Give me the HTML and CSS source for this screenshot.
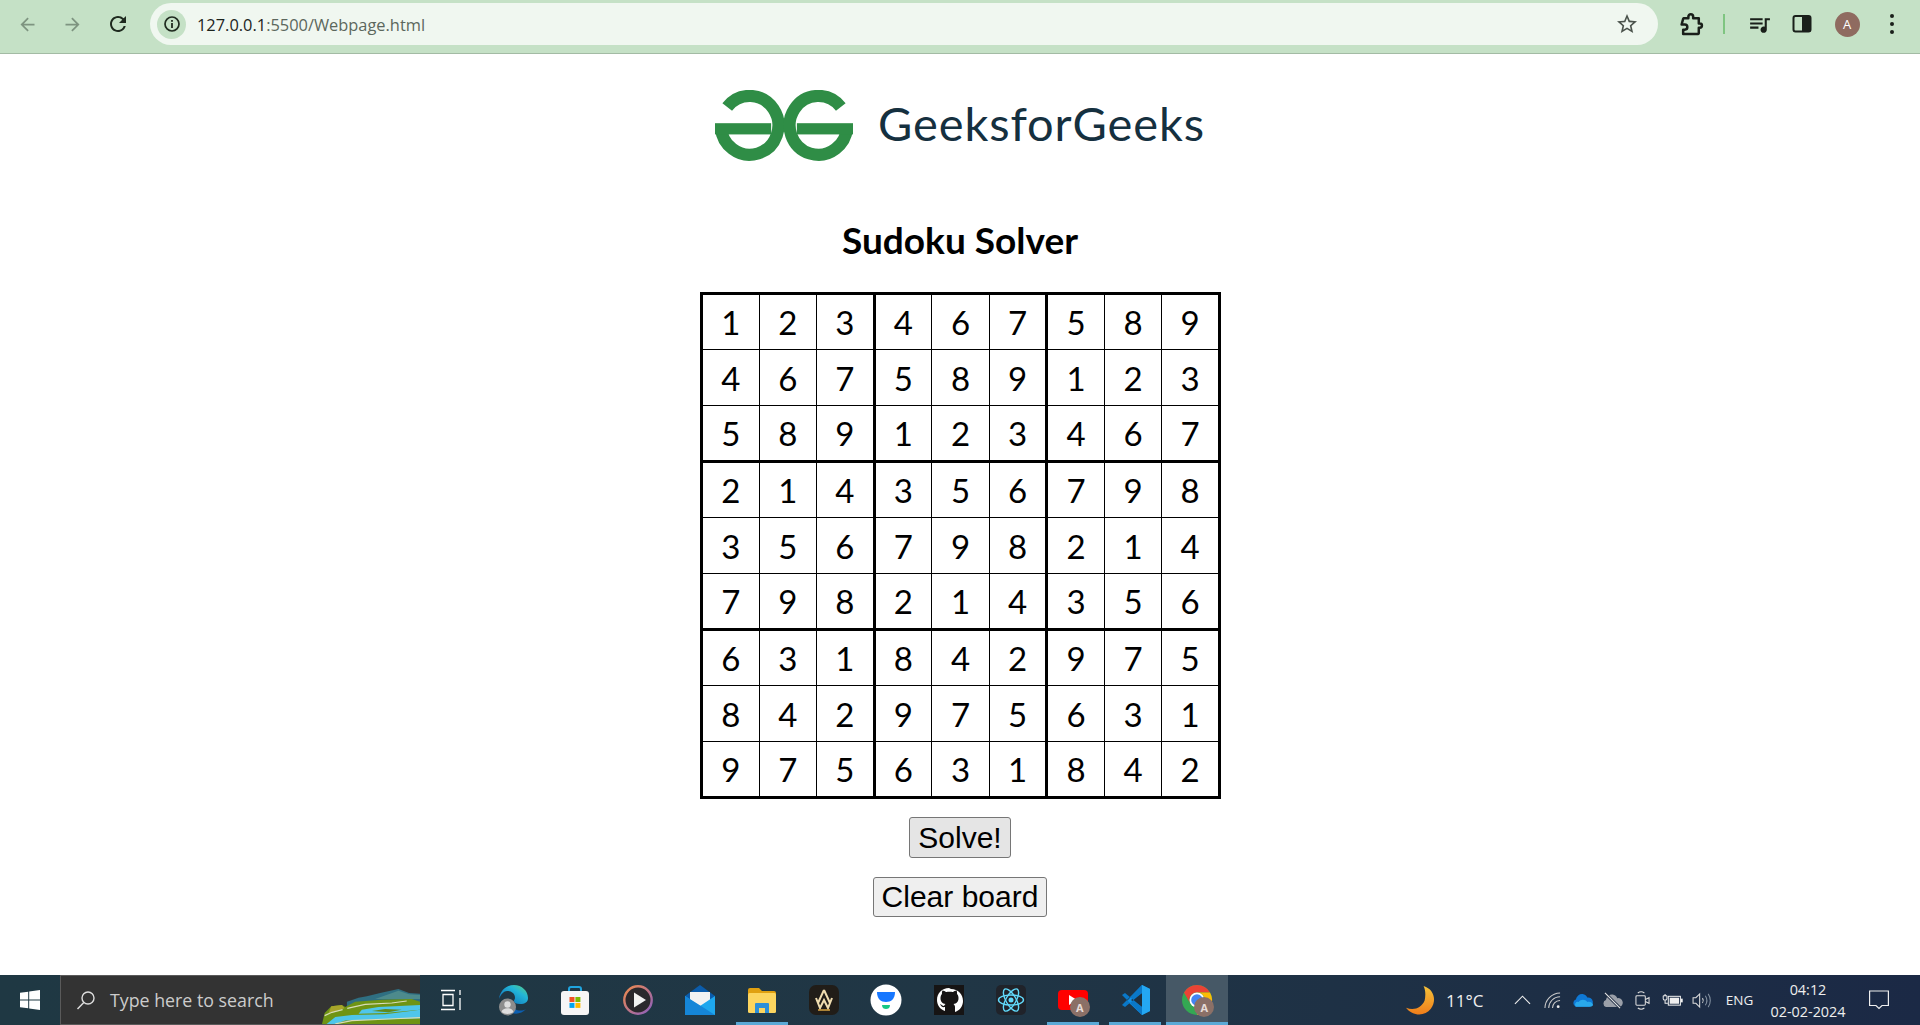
FILE: index.html
```html
<!DOCTYPE html>
<html lang="en">
  <head>
    <meta charset="UTF-8" />
    <meta name="viewport" content="width=device-width, initial-scale=1.0" />
    <title>Sudoku Solver</title>
    <link rel="stylesheet" href="styles.css">
  </head>

  <body>
    <!-- browser toolbar -->
    <div class="toolbar">
      <div class="nav">
        <span class="navBtn off"><svg viewBox="0 0 24 24" width="21" height="21"><path d="M20 11H7.83l5.59-5.59L12 4l-8 8 8 8 1.41-1.41L7.83 13H20v-2z"/></svg></span>
        <span class="navBtn off"><svg viewBox="0 0 24 24" width="21" height="21"><path d="M4 11h12.17l-5.59-5.59L12 4l8 8-8 8-1.41-1.41L16.17 13H4v-2z"/></svg></span>
        <span class="navBtn"><svg viewBox="0 0 24 24" width="24" height="24"><path d="M17.65 6.35A7.958 7.958 0 0 0 12 4c-4.42 0-7.99 3.58-7.99 8s3.57 8 7.99 8c3.73 0 6.84-2.55 7.73-6h-2.08A5.99 5.99 0 0 1 12 18c-3.31 0-6-2.69-6-6s2.69-6 6-6c1.66 0 3.14.69 4.22 1.78L13 11h7V4l-2.35 2.35z"/></svg></span>
      </div>
      <div class="omnibox">
        <span class="chip"><svg viewBox="0 0 18 18" width="18" height="18"><circle cx="9" cy="9" r="7" fill="none" stroke="#1f2a1f" stroke-width="1.7"/><rect x="8.1" y="8" width="1.8" height="5" fill="#1f2a1f"/><rect x="8.1" y="5" width="1.8" height="1.8" fill="#1f2a1f"/></svg></span>
        <span class="url"><b>127.0.0.1</b>:5500/Webpage.html</span>
        <svg class="star" viewBox="0 0 24 24" width="24" height="24"><path d="M22 9.24l-7.19-.62L12 2 9.19 8.63 2 9.24l5.46 4.73L5.82 21 12 17.27 18.18 21l-1.63-7.03L22 9.24zM12 15.4l-3.76 2.27 1-4.28-3.32-2.88 4.38-.38L12 6.1l1.71 4.04 4.38.38-3.32 2.88 1 4.28L12 15.4z"/></svg>
      </div>
      <div class="tools">
        <span class="tool puzzle"><svg viewBox="0 0 24 24" width="25" height="25"><path d="M4.500 6H9V4.500a2.300 2.300 0 0 1 4.600 0V6H19v5h1a2 2 0 0 1 0 4h-1v5.500a.5.500 0 0 1-.5.500H4v-4h1.500a2.500 2.500 0 0 0 0-5H2.500L4 6.500z" fill="none" stroke="#1a1f1a" stroke-width="2.400" stroke-linejoin="round"/></svg></span>
        <span class="sep"></span>
        <span class="tool media"><svg viewBox="0 0 24 24" width="25" height="25"><path d="M15 6H3v2h12V6zm0 4H3v2h12v-2zM3 16h8v-2H3v2zM17 6v8.18c-.31-.11-.65-.18-1-.18-1.66 0-3 1.34-3 3s1.34 3 3 3 3-1.34 3-3V8h3V6h-5z"/></svg></span>
        <span class="tool side"><svg viewBox="0 0 20 20" width="20" height="20"><rect x="1.5" y="2" width="17" height="15.5" rx="2" fill="none" stroke="#1a1f1a" stroke-width="2"/><rect x="10" y="2" width="8.5" height="15.5" fill="#1a1f1a"/></svg></span>
        <span class="tool avatarSlot"><span class="avatar">A</span></span>
        <span class="tool dots"><i></i><i></i><i></i></span>
      </div>
    </div>

    <div class="page">
      <div class="logo">
        <svg viewBox="0 0 418 217" width="139" height="72">
          <g fill="none" stroke="#2f8d46" stroke-width="37">
            <path d="M37 51A87 89 0 1 1 18 106"/>
            <path d="M381 51A87 89 0 1 0 400 106"/>
          </g>
          <rect x="0" y="100" width="170" height="34" fill="#2f8d46"/>
          <rect x="248" y="100" width="170" height="34" fill="#2f8d46"/>
        </svg>
        <span class="logoText">GeeksforGeeks</span>
      </div>

      <h1 class="title">Sudoku Solver</h1>

      <table class="board">
        <tbody>
          <tr><td>1</td><td>2</td><td>3</td><td>4</td><td>6</td><td>7</td><td>5</td><td>8</td><td>9</td></tr>
          <tr><td>4</td><td>6</td><td>7</td><td>5</td><td>8</td><td>9</td><td>1</td><td>2</td><td>3</td></tr>
          <tr><td>5</td><td>8</td><td>9</td><td>1</td><td>2</td><td>3</td><td>4</td><td>6</td><td>7</td></tr>
          <tr><td>2</td><td>1</td><td>4</td><td>3</td><td>5</td><td>6</td><td>7</td><td>9</td><td>8</td></tr>
          <tr><td>3</td><td>5</td><td>6</td><td>7</td><td>9</td><td>8</td><td>2</td><td>1</td><td>4</td></tr>
          <tr><td>7</td><td>9</td><td>8</td><td>2</td><td>1</td><td>4</td><td>3</td><td>5</td><td>6</td></tr>
          <tr><td>6</td><td>3</td><td>1</td><td>8</td><td>4</td><td>2</td><td>9</td><td>7</td><td>5</td></tr>
          <tr><td>8</td><td>4</td><td>2</td><td>9</td><td>7</td><td>5</td><td>6</td><td>3</td><td>1</td></tr>
          <tr><td>9</td><td>7</td><td>5</td><td>6</td><td>3</td><td>1</td><td>8</td><td>4</td><td>2</td></tr>
        </tbody>
      </table>

      <button class="btn solve">Solve!</button>
      <button class="btn clear">Clear board</button>
    </div>

    <!-- windows taskbar -->
    <div class="taskbar">
      <div class="start">
        <svg viewBox="0 0 20 20" width="20" height="20"><path d="M0 2.8 8.2 1.7V9.5H0zM9.2 1.5 20 0V9.5H9.2zM0 10.5H8.2V18.3L0 17.2zM9.2 10.5H20V20L9.2 18.5z" fill="#fff"/></svg>
      </div>
      <div class="search">
        <svg viewBox="0 0 20 20" width="20" height="20"><circle cx="12" cy="8" r="6" fill="none" stroke="#ddd" stroke-width="1.4"/><path d="M7.8 12.4 1.5 19" stroke="#ddd" stroke-width="1.5"/></svg>
        <span class="searchText">Type here to search</span>
        <svg class="hills" viewBox="0 0 295 105" width="98" height="35">
          <path d="M75 38 110 26 135 22 175 12 230 0 262 12 295 14V70H75z" fill="#2f6f82"/>
          <path d="M160 30 230 5 262 16 295 18V30z" fill="#4d8a8c"/>
          <path d="M0 105 8 72 28 52 60 48 70 54 100 38 180 32 270 30 295 38V105z" fill="#6f9414"/>
          <path d="M28 52 60 48 68 58 20 72z" fill="#a8a52a"/>
          <path d="M14 105 40 84 90 78 190 76 295 62V88L180 92 70 95 40 105z" fill="#4fc6ea"/>
          <path d="M120 62 170 54 295 48V62L190 72 110 74z" fill="#4fc6ea"/>
          <path d="M150 66 190 60 240 62 200 70z" fill="#5f8a1a"/>
          <path d="M8 80 30 70 62 62M76 58 130 46 210 42 255 36M40 105 90 95 200 90 295 86" fill="none" stroke="#d8dcb8" stroke-width="3.500"/>
        </svg>
      </div>
      <div class="apps">
        <span class="app"><svg viewBox="0 0 24 24" width="24" height="24" fill="none" stroke="#fff" stroke-width="1.3"><path d="M2 2.5H16M2 21.5H16M4 6.5H14V17.5H4zM21 2V7M21 10V22"/></svg></span>
        <span class="app"><svg viewBox="0 0 32 32" width="32" height="32"><defs><linearGradient id="edge" x1="1" y1="0" x2="0" y2="1"><stop offset="0" stop-color="#5fd07a"/><stop offset=".35" stop-color="#22b5d8"/><stop offset="1" stop-color="#0c5fb0"/></linearGradient></defs><path d="M2 15C3 6 10 1 17 1c8 0 14 6 14 13 0 4-3 6-8 6-4 0-6-1-6-3 0-1 1-2 1-3 0-5-4-7-8-7-3 0-6 3-8 8z" fill="url(#edge)"/><path d="M10 26c5 5 14 5 19-1-3 2-8 2-11 0z" fill="#0c5fb0"/><circle cx="10.500" cy="23" r="8.500" fill="#8d8d8d"/><circle cx="10.500" cy="20.500" r="3.200" fill="#dedede"/><path d="M4.500 28c1-5 11-5 12 0-3 2.500-9 2.500-12 0z" fill="#dedede"/></svg></span>
        <span class="app"><svg viewBox="0 0 32 32" width="32" height="32"><path d="M10 8V5a2 2 0 0 1 2-2h8a2 2 0 0 1 2 2v3" fill="none" stroke="#1fa5e0" stroke-width="2"/><rect x="2" y="7" width="28" height="24" rx="3" fill="#f6f6f6"/><rect x="10.500" y="13" width="5" height="5" fill="#f25022"/><rect x="16.400" y="13" width="5" height="5" fill="#7fba00"/><rect x="10.500" y="18.900" width="5" height="5" fill="#00a4ef"/><rect x="16.400" y="18.900" width="5" height="5" fill="#ffb900"/></svg></span>
        <span class="app"><svg viewBox="0 0 32 32" width="32" height="32"><defs><linearGradient id="play" x1="0" y1="0" x2="1" y2="1"><stop offset="0" stop-color="#f08a4b"/><stop offset="1" stop-color="#8a5fc0"/></linearGradient></defs><circle cx="16" cy="16" r="13.700" fill="#2a282c" stroke="url(#play)" stroke-width="2.400"/><path d="M12 8.500 24 16 12 23.500z" fill="#f2f2f2"/></svg></span>
        <span class="app"><svg viewBox="0 0 32 32" width="32" height="32"><path d="M16 1 31 12V20H1V12z" fill="#0b5cab"/><path d="M6 8H26V20L16 24 6 20z" fill="#f2f2f2"/><path d="M1 12 16 22 31 12V31H1z" fill="#1ea7ee"/><path d="M1 31 1 12 17 22 31 31z" fill="#1586d8"/></svg></span>
        <span class="app on"><svg viewBox="0 0 32 32" width="32" height="32"><path d="M2 6a2 2 0 0 1 2-2h9l3 3h12a2 2 0 0 1 2 2v4H2z" fill="#e0a010"/><rect x="2" y="9" width="28" height="20" rx="1.500" fill="#fcd55f"/><path d="M9 29V20a1 1 0 0 1 1-1h12a1 1 0 0 1 1 1v9h-4v-5h-6v5z" fill="#2c8fd8"/></svg></span>
        <span class="app"><svg viewBox="0 0 32 32" width="32" height="32"><rect x="1" y="1" width="30" height="30" rx="7" fill="#211d18"/><path d="M16 6 10 19M16 6 22 19M8 14 12 24 16 16 20 24 24 14" fill="none" stroke="#f0ddb0" stroke-width="2"/><path d="M10 26H22" stroke="#d9a441" stroke-width="1.5"/></svg></span>
        <span class="app"><svg viewBox="0 0 32 32" width="32" height="32"><circle cx="16" cy="16" r="15.5" fill="#fff"/><path d="M7 8H25C25 15 21 18 16 18S7 15 7 8z" fill="#1677ff"/><path d="M12 21H20C20 24 18 25 16 25S12 24 12 21z" fill="#16c784"/></svg></span>
        <span class="app"><svg viewBox="0 0 32 32" width="32" height="32"><rect x="1" y="1" width="30" height="30" fill="#161414"/><path d="M16 4C9 4 4 9 4 16c0 5 3 9.5 8 11v-4c-3 .6-4-1-5-3 1.500 .5 2.500 2 4 2 .5-1 1-1.500 1.500-2-3-.5-5-2-5-6 0-1.500.5-3 1.500-4-.2-1 0-2.500.5-3.500 1.500 0 2.500 1 3.500 1.500 1.500-.4 5.500-.4 7 0 1-.5 2-1.500 3.500-1.500.5 1 .7 2.500.5 3.500 1 1 1.500 2.500 1.500 4 0 4-2 5.500-5 6 1 .8 1.500 2 1.500 3v5c5-1.500 8-6 8-11 0-7-5-12-12-12z" fill="#fff"/></svg></span>
        <span class="app"><svg viewBox="0 0 32 32" width="32" height="32"><rect x="1" y="1" width="30" height="30" rx="5" fill="#20232a"/><g fill="none" stroke="#61dafb" stroke-width="1.4"><ellipse cx="16" cy="16" rx="12.500" ry="5"/><ellipse cx="16" cy="16" rx="12.500" ry="5" transform="rotate(60 16 16)"/><ellipse cx="16" cy="16" rx="12.500" ry="5" transform="rotate(120 16 16)"/></g><circle cx="16" cy="16" r="2.500" fill="#61dafb"/></svg></span>
        <span class="app on"><svg viewBox="0 0 32 32" width="32" height="32"><rect x="1" y="6" width="30" height="20" rx="4" fill="#f00"/><path d="M12 11 20 16 12 21z" fill="#fff"/></svg><span class="badge">A</span></span>
        <span class="app on"><svg viewBox="0 0 32 32" width="32" height="32"><path d="M23 1 31 5V27L23 31 8 17z" fill="#0f8fe6"/><path d="M23 1V31L31 27V5z" fill="#24a7f2"/><path d="M23 9V23L12 16z" fill="#1e2f3e"/><path d="M3 11 6 9 23 23V31zM3 21 6 23 23 9V1z" fill="#0a78c8"/></svg></span>
        <span class="app on active"><svg viewBox="0 0 32 32" width="32" height="32"><circle cx="16" cy="16" r="15" fill="#34a853"/><path d="M3 8.500A15 15 0 0 1 29 8.500H16A7.500 7.500 0 0 0 9.500 20z" fill="#ea4335"/><path d="M29 8.500A15 15 0 0 1 16 31L22.500 20A7.500 7.500 0 0 0 16 8.500z" fill="#fbbc04"/><circle cx="16" cy="16" r="7.500" fill="#fff"/><circle cx="16" cy="16" r="5.800" fill="#4285f4"/></svg><span class="badge">A</span></span>
      </div>
      <div class="tray">
        <div class="weather">
          <svg viewBox="0 0 28 28" width="29" height="29"><defs><linearGradient id="moon" x1="0" y1="0" x2="0" y2="1"><stop offset="0" stop-color="#f5c23a"/><stop offset="1" stop-color="#ef7d1a"/></linearGradient></defs><path d="M17 0C27 3 30 14 24 22 18 30 6 29 0 21 8 24 15 21 18 14 19 9 19 4 17 0z" fill="url(#moon)"/></svg>
          <span class="temp">11°C</span>
        </div>
        <span class="trayIcon"><svg viewBox="0 0 18 10" width="17" height="10"><path d="M1 9 9 1 17 9" fill="none" stroke="#eee" stroke-width="1.2"/></svg></span>
        <span class="trayIcon"><svg viewBox="0 0 18 18" width="17" height="17" fill="none" stroke="#ccc" stroke-width="1.1"><path d="M1 17C1 9 8 1 17 1M5 17C5 11 10 5 17 5M9 17C9 13 12 9 17 9"/><circle cx="15" cy="15.500" r="1.500" fill="#eee" stroke="none"/></svg></span>
        <span class="trayIcon"><svg viewBox="0 0 22 14" width="21" height="14"><path d="M4 14A4 4 0 0 1 4 6.500C5 2 9 0 12 1c2 .5 3.500 2 4 3.500A4.800 4.800 0 0 1 18 14z" fill="#0f78d4"/><path d="M4 14A3 3 0 0 1 7 9c2-3 7-3 9 0 3-1 6 1 6 3 0 1-1 2-3 2z" fill="#29a8ea"/></svg></span>
        <span class="trayIcon"><svg viewBox="0 0 22 18" width="21" height="17"><path d="M4 16A4 4 0 0 1 4 8.500C5 4 9 2 12 3c2 .5 3.500 2 4 3.500A4.800 4.800 0 0 1 18 16z" fill="#9a9fa8"/><path d="M3 1 19 17" stroke="#1c2a40" stroke-width="3"/><path d="M3 1 19 17" stroke="#e6e6e6" stroke-width="1.200"/></svg></span>
        <span class="trayIcon"><svg viewBox="0 0 16 20" width="15" height="19" fill="none" stroke="#ddd" stroke-width="1.100"><path d="M3 2C5 .5 8 .5 10 2M3 18C5 19.500 8 19.500 10 18"/><rect x="1" y="5" width="10" height="10" rx="1"/><path d="M11 9 15 7V13L11 11"/></svg></span>
        <span class="trayIcon"><svg viewBox="0 0 22 14" width="21" height="13" fill="#eee"><path d="M1 2H5M3 0V2M1 2V5C1 7 5 7 5 5V2M3 7V10H6" fill="none" stroke="#eee" stroke-width="1.100"/><rect x="6.500" y="2.500" width="13" height="9.500" fill="none" stroke="#eee" stroke-width="1.100"/><rect x="8" y="4" width="10" height="6.500"/><rect x="20" y="5" width="2" height="4"/></svg></span>
        <span class="trayIcon"><svg viewBox="0 0 22 18" width="21" height="17" fill="none" stroke="#ddd" stroke-width="1.100"><path d="M1 6H4L8 2V16L4 12H1z"/><path d="M11 6.500C12 8 12 10 11 11.500"/><path d="M14 4C16 7 16 11 14 14M17 2C20 6 20 12 17 16" stroke="#8390a0"/></svg></span>
        <span class="lang">ENG</span>
        <span class="clock"><span>04:12</span><span>02-02-2024</span></span>
        <span class="notif"><svg viewBox="0 0 20 20" width="20" height="20"><path d="M.6 1H19.400V15.500H13L10 18.500 7 15.500H.6z" fill="none" stroke="#eee" stroke-width="1.200"/></svg></span>
      </div>
    </div>
  </body>
</html>
```

FILE: styles.css
```css
* {
  box-sizing: border-box;
}

html,
body {
  height: 100%;
}

body {
  margin: 0;
  display: flex;
  flex-direction: column;
  height: 1025px;
  overflow: hidden;
  background: #fff;
  font-family: "Lato", "Open Sans", sans-serif;
  color: #000;
}

/* browser toolbar */
.toolbar {
  height: 54px;
  flex-shrink: 0;
  display: flex;
  align-items: flex-start;
  padding: 3px 10px 0 5px;
  background: #c5e1c6;
  border-bottom: 1px solid #a3bba4;
}

.nav {
  display: flex;
  height: 42px;
  margin-right: 10px;
}

.navBtn {
  width: 45px;
  display: flex;
  align-items: center;
  justify-content: center;
  fill: #1f2a1f;
}

.navBtn.off {
  fill: #7e9480;
}

.omnibox {
  flex: 1;
  height: 42px;
  display: flex;
  align-items: center;
  padding: 0 19px 0 7px;
  background: #f0f7f0;
  border-radius: 21px;
}

.chip {
  width: 29px;
  height: 29px;
  display: flex;
  align-items: center;
  justify-content: center;
  background: #c5e1c6;
  border-radius: 50%;
}

.url {
  margin-left: 11px;
  font: 16.4px "Open Sans", sans-serif;
  color: #5c675d;
}

.url b {
  font-weight: 400;
  color: #1c241d;
}

.star {
  margin-left: auto;
  fill: #4b534c;
}

.tools {
  display: flex;
  height: 42px;
  margin-left: 11px;
  align-items: center;
}

.tool {
  display: flex;
  align-items: center;
  justify-content: center;
  height: 42px;
  fill: #1a1f1a;
}

.puzzle {
  width: 45px;
}

.sep {
  width: 20px;
  height: 20px;
  background: linear-gradient(#7fc581, #7fc581) center / 2px 100% no-repeat;
}

.media {
  width: 50px;
}

.side {
  width: 36px;
}

.avatarSlot {
  width: 54px;
}

.dots {
  width: 36px;
  flex-direction: column;
  gap: 4px;
}

.dots i {
  width: 4px;
  height: 4px;
  border-radius: 50%;
  background: #1a1f1a;
}

.avatar {
  width: 25px;
  height: 25px;
  display: flex;
  align-items: center;
  justify-content: center;
  border-radius: 50%;
  background: #8f6b60;
  color: #fff;
  font: 13px "Open Sans", sans-serif;
}

/* page */
.page {
  flex: 1;
  display: flex;
  flex-direction: column;
  align-items: center;
}

.logo {
  display: flex;
  align-items: center;
  gap: 25px;
  margin-top: 36px;
  height: 72px;
  width: 490px;
}

.logoText {
  padding-bottom: 5px;
  font-size: 47px;
  line-height: 1;
  color: #15303f;
  letter-spacing: 0.9px;
}

.title {
  margin: 56px 0 0;
  font-size: 37px;
  line-height: 44px;
  font-weight: 700;
}

.board {
  width: 521px;
  margin: 30px 0 0 1px;
  table-layout: fixed;
  border-collapse: collapse;
  border: 3px solid #000;
}

.board td {
  height: 56px;
  padding: 0;
  text-align: center;
  font-size: 33px;
  border: 1px solid #000;
}

.board td:nth-child(3n) {
  border-right: 3px solid #000;
}

.board tr:nth-child(3n) td {
  border-bottom: 3px solid #000;
}

.btn {
  font-family: "Liberation Sans", Arial, sans-serif;
  font-size: 30px;
  height: 41px;
  padding: 0 8px;
  color: #000;
  background: #efefef;
  border: 1px solid #767676;
  border-radius: 3px;
}

.solve {
  margin-top: 18px;
  background: #e5e5e5;
}

.clear {
  height: 40px;
  margin-top: 19px;
}

/* taskbar */
.taskbar {
  height: 50px;
  flex-shrink: 0;
  display: flex;
  background: linear-gradient(90deg, #1f3843, #203645 50%, #1b2945);
  color: #eee;
}

.start {
  width: 60px;
  display: flex;
  align-items: center;
  justify-content: center;
}

.search {
  position: relative;
  width: 360px;
  display: flex;
  align-items: center;
  padding-left: 15px;
  overflow: hidden;
  background: #333;
  border: 1px solid #5a5a5a;
  border-right: 0;
}

.searchText {
  margin-left: 14px;
  font: 17.8px "Open Sans", sans-serif;
  color: #ccc;
}

.hills {
  position: absolute;
  right: 0;
  bottom: 0;
}

.apps {
  display: flex;
}

.app {
  position: relative;
  width: 62.2px;
  height: 50px;
  display: flex;
  align-items: center;
  justify-content: center;
}

.app.on::after {
  content: "";
  position: absolute;
  left: 5px;
  right: 5px;
  bottom: 0;
  height: 3px;
  background: #5aa9d6;
}

.app.active {
  background: #465866;
}

.app.active::after {
  left: 0;
  right: 0;
}

.badge {
  position: absolute;
  left: 28px;
  top: 22px;
  width: 20px;
  height: 20px;
  display: flex;
  align-items: center;
  justify-content: center;
  border-radius: 50%;
  background: #8b7067;
  color: #e6dcd8;
  font: 700 11px "Open Sans", sans-serif;
}

.tray {
  margin-left: auto;
  display: flex;
  align-items: center;
  font-family: "Open Sans", sans-serif;
  padding-right: 16px;
}

.weather {
  width: 101px;
  display: flex;
  align-items: center;
  gap: 11px;
}

.temp {
  font-size: 17px;
}

.trayIcon {
  width: 30px;
  display: flex;
  justify-content: center;
}

.lang {
  width: 45px;
  text-align: center;
  font-size: 13.5px;
}

.clock {
  width: 92px;
  display: flex;
  flex-direction: column;
  align-items: center;
  gap: 3px;
  font-size: 14.4px;
  line-height: 19px;
}

.notif {
  width: 50px;
  display: flex;
  justify-content: center;
}
```
